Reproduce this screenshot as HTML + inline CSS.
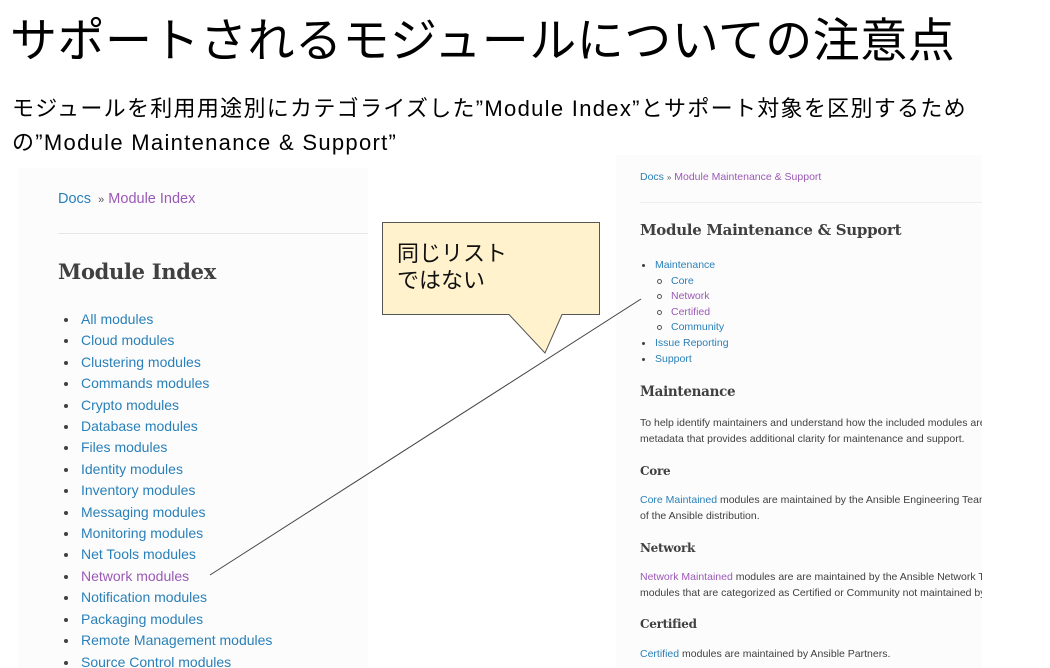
<!DOCTYPE html>
<html><head><meta charset="utf-8"><style>
body{margin:0;width:1050px;height:668px;overflow:hidden;background:#fff;position:relative;font-family:"Liberation Sans","Noto Sans CJK JP",sans-serif;color:#000}
.a{position:absolute}
.t1{left:10px;top:2px;font-size:47px;white-space:nowrap;letter-spacing:0.5px}
.t2{left:12px;top:92px;font-size:22px;line-height:34px;letter-spacing:1.3px;white-space:nowrap}
.p{background:#fcfcfc;overflow:hidden}
.b{color:#2980b9}.v{color:#9b59b6}
.h{font-family:"DejaVu Serif","Liberation Serif",serif;font-weight:bold;color:#404040;letter-spacing:-0.3px}
ul{margin:0;padding:0;list-style:none}
.l li{position:relative;padding-left:21px;font-size:14px;line-height:21.4px;color:#2980b9}
.l li:before{content:"";position:absolute;left:4px;top:9px;width:4px;height:4px;border-radius:50%;background:#404040}
.r li{position:relative;padding-left:15px;font-size:10.5px;line-height:15.6px;color:#2980b9}
.r li:before{content:"";position:absolute;left:2px;top:6px;width:3px;height:3px;border-radius:50%;background:#404040}
.r li.s{padding-left:31px}
.r li.s:before{left:17px;top:5px;width:3px;height:3px;background:none;border:1px solid #555}
.tx{font-size:10.5px;line-height:15.5px;color:#404040}
</style></head><body>
<div class="a t1">サポートされるモジュールについての注意点</div>
<div class="a t2">モジュールを利用用途別にカテゴライズした”Module Index”とサポート対象を区別するため<br>の”Module Maintenance &amp; Support”</div>

<div class="a p" style="left:18px;top:168px;width:350px;height:500px">
 <div class="a" style="left:40px;top:23px;font-size:14.5px"><span class="b">Docs</span> <span style="color:#555;font-size:11px">&nbsp;»</span> <span class="v">Module Index</span></div>
 <div class="a" style="left:40px;top:65px;width:310px;height:1px;background:#e6e6e6"></div>
 <div class="a h" style="left:40px;top:91px;font-size:21px">Module Index</div>
 <ul class="a l" style="left:42px;top:141px">
  <li>All modules</li><li>Cloud modules</li><li>Clustering modules</li><li>Commands modules</li><li>Crypto modules</li><li>Database modules</li><li>Files modules</li><li>Identity modules</li><li>Inventory modules</li><li>Messaging modules</li><li>Monitoring modules</li><li>Net Tools modules</li><li class="v" style="color:#9b59b6">Network modules</li><li>Notification modules</li><li>Packaging modules</li><li>Remote Management modules</li><li>Source Control modules</li>
 </ul>
</div>

<div class="a p" style="left:616px;top:155px;width:366px;height:513px">
 <div class="a" style="left:24px;top:16px;font-size:10.5px"><span class="b">Docs</span> <span style="color:#555;font-size:8px">»</span> <span class="v">Module Maintenance &amp; Support</span></div>
 <div class="a" style="left:24px;top:47px;width:342px;height:1px;background:#eee"></div>
 <div class="a h" style="left:24px;top:66px;font-size:15px">Module Maintenance &amp; Support</div>
 <ul class="a r" style="left:24px;top:103px">
  <li>Maintenance</li><li class="s">Core</li><li class="s" style="color:#9b59b6">Network</li><li class="s" style="color:#9b59b6">Certified</li><li class="s">Community</li><li>Issue Reporting</li><li>Support</li>
 </ul>
 <div class="a h" style="left:24px;top:229px;font-size:13.5px">Maintenance</div>
 <div class="a tx" style="left:24px;top:261px;white-space:nowrap">To help identify maintainers and understand how the included modules are<br>metadata that provides additional clarity for maintenance and support.</div>
 <div class="a h" style="left:24px;top:309px;font-size:12px">Core</div>
 <div class="a tx" style="left:24px;top:338px;white-space:nowrap"><span class="b">Core Maintained</span> modules are maintained by the Ansible Engineering Team.<br>of the Ansible distribution.</div>
 <div class="a h" style="left:24px;top:386px;font-size:12px">Network</div>
 <div class="a tx" style="left:24px;top:415px;white-space:nowrap"><span class="v">Network Maintained</span> modules are are maintained by the Ansible Network Te<br>modules that are categorized as Certified or Community not maintained by</div>
 <div class="a h" style="left:24px;top:462px;font-size:12px">Certified</div>
 <div class="a tx" style="left:24px;top:492px;white-space:nowrap"><span class="b">Certified</span> modules are maintained by Ansible Partners.</div>
</div>

<svg class="a" style="left:0;top:0" width="1050" height="668">
 <line x1="210" y1="575" x2="641" y2="299" stroke="#444" stroke-width="1"/>
 <path d="M382.5 222.5 H599.5 V314.5 H562 L545 353 L509 314.5 H382.5 Z" fill="#fff2cc" stroke="#555" stroke-width="1"/>
</svg>
<div class="a" style="left:397px;top:240px;font-size:22px;line-height:27px;color:#111">同じリスト<br>ではない</div>
</body></html>
